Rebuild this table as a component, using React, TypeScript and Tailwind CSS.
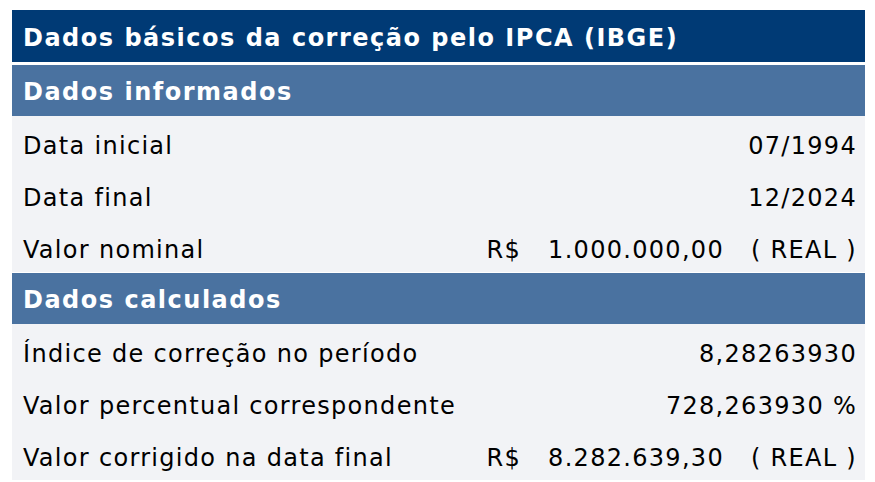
import React from "react";

const font = { fontFamily: '"DejaVu Sans", Verdana, sans-serif' };

function Row({ label, children }: { label: string; children: React.ReactNode }) {
  return (
    <div className="flex h-[52px] items-center justify-between bg-[#f2f3f6] pl-[11px] pr-[8px] pt-[7px] text-[24px] tracking-[1.3px] text-black">
      <span>{label}</span>
      <div className="flex items-center gap-[27px]">{children}</div>
    </div>
  );
}

export default function App() {
  return (
    <div className="h-[482px] w-[875px] bg-white pl-[12px] pt-[10px]" style={font}>
      <div className="w-[853px]">
        <div className="flex h-[52px] items-center bg-[#003a75] pl-[11px] pt-[4px] text-[24px] font-bold tracking-[1.5px] text-white">
          Dados básicos da correção pelo IPCA (IBGE)
        </div>
        <div className="mt-[3px] flex h-[51px] items-center bg-[#4a72a0] pl-[11px] pt-[2px] text-[24px] font-bold tracking-[1.5px] text-white">
          Dados informados
        </div>
        <Row label="Data inicial"><span>07/1994</span></Row>
        <Row label="Data final"><span>12/2024</span></Row>
        <Row label="Valor nominal">
          <span>R$</span>
          <span>1.000.000,00</span>
          <span>( REAL )</span>
        </Row>
        <div className="mt-[1px] flex h-[51px] items-center bg-[#4a72a0] pl-[11px] pt-[2px] text-[24px] font-bold tracking-[1.5px] text-white">
          Dados calculados
        </div>
        <Row label="Índice de correção no período"><span>8,28263930</span></Row>
        <Row label="Valor percentual correspondente"><span>728,263930 %</span></Row>
        <Row label="Valor corrigido na data final">
          <span>R$</span>
          <span>8.282.639,30</span>
          <span>( REAL )</span>
        </Row>
      </div>
    </div>
  );
}
